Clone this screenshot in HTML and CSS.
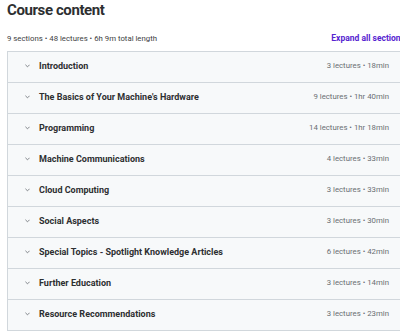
FILE: index.html
```html
<!DOCTYPE html>
<html lang="en">
<head>
  <meta charset="UTF-8" />
  <meta name="viewport" content="width=device-width, initial-scale=1.0" />
  <title>Course content</title>
  <link rel="stylesheet" href="styles.css">
</head>
<body>
  <div class="curriculum">
    <h2 class="curriculum-title">Course content</h2>
    <div class="curriculum-summary">
      <span class="summary-text">9 sections • 48 lectures • 6h 9m total length</span>
      <button class="expand-btn">Expand all sections</button>
    </div>
    <div class="sections">
      <div class="section">
        <svg class="chevron" viewBox="0 0 6 4"><polyline points="0.5,0.5 3,3 5.5,0.5" /></svg>
        <span class="section-title">Introduction</span>
        <span class="section-meta">3 lectures • 18min</span>
      </div>
      <div class="section">
        <svg class="chevron" viewBox="0 0 6 4"><polyline points="0.5,0.5 3,3 5.5,0.5" /></svg>
        <span class="section-title">The Basics of Your Machine's Hardware</span>
        <span class="section-meta">9 lectures • 1hr 40min</span>
      </div>
      <div class="section">
        <svg class="chevron" viewBox="0 0 6 4"><polyline points="0.5,0.5 3,3 5.5,0.5" /></svg>
        <span class="section-title">Programming</span>
        <span class="section-meta">14 lectures • 1hr 18min</span>
      </div>
      <div class="section">
        <svg class="chevron" viewBox="0 0 6 4"><polyline points="0.5,0.5 3,3 5.5,0.5" /></svg>
        <span class="section-title">Machine Communications</span>
        <span class="section-meta">4 lectures • 33min</span>
      </div>
      <div class="section">
        <svg class="chevron" viewBox="0 0 6 4"><polyline points="0.5,0.5 3,3 5.5,0.5" /></svg>
        <span class="section-title">Cloud Computing</span>
        <span class="section-meta">3 lectures • 33min</span>
      </div>
      <div class="section">
        <svg class="chevron" viewBox="0 0 6 4"><polyline points="0.5,0.5 3,3 5.5,0.5" /></svg>
        <span class="section-title">Social Aspects</span>
        <span class="section-meta">3 lectures • 30min</span>
      </div>
      <div class="section">
        <svg class="chevron" viewBox="0 0 6 4"><polyline points="0.5,0.5 3,3 5.5,0.5" /></svg>
        <span class="section-title">Special Topics - Spotlight Knowledge Articles</span>
        <span class="section-meta">6 lectures • 42min</span>
      </div>
      <div class="section">
        <svg class="chevron" viewBox="0 0 6 4"><polyline points="0.5,0.5 3,3 5.5,0.5" /></svg>
        <span class="section-title">Further Education</span>
        <span class="section-meta">3 lectures • 14min</span>
      </div>
      <div class="section">
        <svg class="chevron" viewBox="0 0 6 4"><polyline points="0.5,0.5 3,3 5.5,0.5" /></svg>
        <span class="section-title">Resource Recommendations</span>
        <span class="section-meta">3 lectures • 23min</span>
      </div>
    </div>
  </div>
</body>
</html>
```

FILE: styles.css
```css
html, body {
  margin: 0;
  padding: 0;
  overflow: hidden;
  background-color: #fff;
}
body {
  font-family: Roboto, "Liberation Sans", sans-serif;
  color: #2d2f31;
}
.curriculum {
  width: 398px;
  padding: 3px 0 0 7px;
}
.curriculum-title {
  margin: 0;
  font-size: 15px;
  line-height: 15px;
  font-weight: 700;
  letter-spacing: -0.4px;
}
/* summary line with the expand link */
.curriculum-summary {
  display: flex;
  justify-content: space-between;
  align-items: center;
  height: 12px;
  margin: 14px 0 7px;
}
.summary-text {
  font-size: 7.8px;
  color: #3e4143;
}
.expand-btn {
  background: none;
  border: none;
  padding: 0;
  font-family: inherit;
  font-size: 8.5px;
  font-weight: 700;
  color: #5624d0;
  white-space: nowrap;
  cursor: pointer;
}
.sections {
  border: 1px solid #d1d7dc;
}
.section {
  display: flex;
  align-items: center;
  box-sizing: border-box;
  height: 31px;
  padding: 0 15px 3px 17px;
  background-color: #f7f9fa;
  border-bottom: 1px solid #d1d7dc;
}
.section:last-child {
  height: 30px;
  border-bottom: none;
}
.chevron {
  width: 5px;
  height: 4px;
  margin-right: 9px;
  fill: none;
  stroke: #6a6f73;
  stroke-width: 1;
}
.section-title {
  flex: 1;
  font-size: 9px;
  font-weight: 700;
  color: #2d2f31;
}
.section-meta {
  font-size: 7.8px;
  color: #6a6f73;
}
```
